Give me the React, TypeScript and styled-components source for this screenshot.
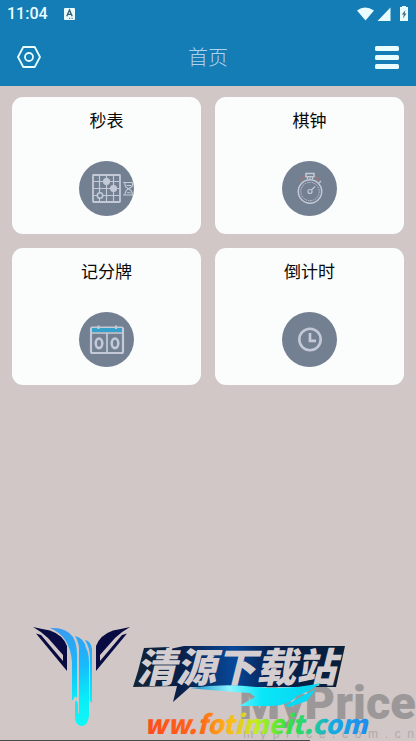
import React from 'react';
import styled, { createGlobalStyle } from 'styled-components';

const GlobalStyle = createGlobalStyle`
  *, *::before, *::after { box-sizing: border-box; }
  body {
    margin: 0;
    background: #d0c7c6;
    font-family: "Noto Sans CJK SC", "Noto Sans", sans-serif;
  }
`;

const Page = styled.div`
  position: relative;
  display: flex;
  flex-direction: column;
  min-height: 100vh;
  overflow: hidden;
  background: #d0c7c6;
`;

const Header = styled.header`
  background: #147db6;
  color: #e9fdff;
`;

const StatusBar = styled.div`
  display: flex;
  align-items: center;
  height: 28px;
  padding: 0 7px;
  font: 500 16px/28px Roboto, sans-serif;
`;

const StatusLeft = styled.div`
  display: flex;
  align-items: center;
  gap: 16px;
  flex: 1;
`;

const Toolbar = styled.div`
  display: grid;
  grid-template-columns: 1fr auto 1fr;
  align-items: center;
  height: 58px;
  padding: 0 16px;
`;

const IconButton = styled.button<{ $end?: boolean }>`
  display: flex;
  justify-self: ${(p) => (p.$end ? 'end' : 'start')};
  padding: 0;
  border: 0;
  background: none;
  color: inherit;
  cursor: pointer;
`;

const Title = styled.h1`
  margin: 0;
  color: #b0d2ed;
  font-size: 20px;
  font-weight: 300;
  line-height: 28px;
`;

const Cards = styled.main`
  display: grid;
  grid-template-columns: 1fr 1fr;
  gap: 14px;
  padding: 11px 12px;
`;

const Card = styled.button`
  display: flex;
  flex-direction: column;
  align-items: center;
  gap: 29px;
  padding: 11px 0 18px;
  border: 0;
  border-radius: 11px;
  background: #fbfcfc;
  color: #080808;
  font-family: inherit;
  font-size: 17px;
  line-height: 24px;
  cursor: pointer;
`;

const Disc = styled.span`
  display: flex;
  width: 55px;
  height: 55px;
  border-radius: 50%;
  background: #738092;
  overflow: hidden;
`;

const Watermark = styled.aside`
  position: absolute;
  right: 0;
  bottom: 0;
  width: 416px;
  height: 126px;
  pointer-events: none;
`;

const GearIcon = () => (
  <svg width="26" height="24" viewBox="0 0 26 24" fill="none" stroke="currentColor" strokeWidth="1.8">
    <path d="M7.3 2H18.7L24 12L18.7 22H7.3L2 12Z" strokeLinejoin="round" />
    <circle cx="13" cy="12" r="4" />
  </svg>
);

const MenuIcon = () => (
  <svg width="26" height="24" viewBox="0 0 26 24" fill="currentColor">
    <rect x="1" y="1" width="24" height="5" rx="1.6" />
    <rect x="1" y="10" width="24" height="5" rx="1.6" />
    <rect x="1" y="19" width="24" height="5" rx="1.6" />
  </svg>
);

const KeyboardBadge = () => (
  <svg width="11" height="12" viewBox="0 0 11 12">
    <rect width="11" height="12" rx="1" fill="#e9fdff" />
    <path d="M2.8 8.3L5.5 2L8.2 8.3M3.7 6.4H7.3" fill="none" stroke="#35617c" strokeWidth="1.4" />
    <path d="M5 10.3H6.2M7.5 10.3H8.7" stroke="#35617c" />
  </svg>
);

const StatusIcons = () => (
  <svg width="53" height="16" viewBox="0 0 53 16" fill="currentColor" aria-label="Wi-Fi, signal, battery">
    <path d="M1 4.4Q9 -1.6 18 4.4L9.5 14.5Z" />
    <path d="M34.5 1.5V15H21.5Z" />
    <path d="M46 1V0H50V1H52V15H44V1Z" />
    <path d="M49.5 4L45.8 8.6H47.8L47 12.5L50.5 7.6H48.6Z" fill="#426c83" />
  </svg>
);

const BoardIcon = () => (
  <svg width="55" height="55" viewBox="0 0 55 55" fill="none" stroke="#c3c9d6">
    <rect x="14" y="14" width="27" height="27" rx="0.5" strokeWidth="1.8" />
    <path d="M20.5 14V41M27.5 14V41M34.5 14V41M14 20.5H41M14 27.5H41M14 34.5H41" strokeWidth="1.2" />
    <circle cx="27.5" cy="20.5" r="3.2" fill="#c3c9d6" />
    <circle cx="34.5" cy="27.5" r="3.2" fill="#c3c9d6" />
    <circle cx="21" cy="34.5" r="2.7" fill="#738092" strokeWidth="1.6" />
    <path d="M44 21.5H55M44 34H55M46 21.5V24Q46 26 49.5 27.7Q46 29.5 46 34M53.5 21.5V24Q53.5 26 49.5 27.7Q53.5 29.5 53.5 34M47.5 24.5H52M48 31.8H51.5" strokeWidth="1.1" />
  </svg>
);

const StopwatchIcon = () => (
  <svg width="55" height="55" viewBox="0 0 55 55" fill="none" stroke="#c3c9d6">
    <path d="M18.5 20Q20 16.5 23 15.5M32 15.5Q36 17 37.5 20" stroke="#a9736f" strokeWidth="1.3" />
    <circle cx="28" cy="30.5" r="11.7" strokeWidth="1.5" />
    <circle cx="28" cy="30.5" r="9.2" strokeWidth="1" strokeDasharray="1.5 1" />
    <circle cx="28" cy="30.5" r="2" strokeWidth="1.2" />
    <path d="M29.5 29L33 25.5M28 18.5V16.5M25.5 18.5V16M30.5 18.5V16M37 22L39 20" strokeWidth="1.1" />
    <rect x="24" y="12.5" width="8" height="3.2" strokeWidth="1.5" />
  </svg>
);

const ScoreIcon = () => (
  <svg width="55" height="55" viewBox="0 0 55 55" fill="none" stroke="#c3c9d6">
    <rect x="12" y="15.5" width="32" height="25.5" rx="1.5" strokeWidth="2.2" />
    <path d="M12 21H44M28 21V41" strokeWidth="1.7" />
    <path d="M13 18H43" stroke="#34a1cb" strokeWidth="4" />
    <path d="M19.5 13.5V17M37 13.5V17" strokeWidth="2" />
    <ellipse cx="20" cy="31.3" rx="3.3" ry="4.8" strokeWidth="2.6" />
    <ellipse cx="36" cy="31.3" rx="3.3" ry="4.8" strokeWidth="2.6" />
  </svg>
);

const ClockIcon = () => (
  <svg width="55" height="55" viewBox="0 0 55 55" fill="none" stroke="#c3c9d6">
    <circle cx="28" cy="27.5" r="10.7" strokeWidth="2.6" />
    <path d="M28 21V28.8H34" strokeWidth="2.7" />
  </svg>
);

const Wing = () => (
  <path
    d="M33 12Q43 14 50 15.5Q63 20 67 31V56L36 18.5L41 20L63 46V40L48 23Q42 17 33 12Z"
    fill="#090b43"
  />
);

const SiteMark = () => (
  <svg width="416" height="126" viewBox="0 0 416 126">
    <defs>
      <linearGradient id="drip" gradientUnits="userSpaceOnUse" x1="60" y1="12" x2="75" y2="111">
        <stop offset="0" stopColor="#3b9af0" />
        <stop offset="0.4" stopColor="#18b9fb" />
        <stop offset="0.75" stopColor="#08eef8" />
        <stop offset="1" stopColor="#10f6f6" />
      </linearGradient>
      <linearGradient id="panel" gradientUnits="userSpaceOnUse" x1="134" y1="0" x2="343" y2="0">
        <stop offset="0" stopColor="#132433" />
        <stop offset="0.22" stopColor="#0a1f48" />
        <stop offset="0.48" stopColor="#07489a" />
        <stop offset="0.66" stopColor="#07204e" />
        <stop offset="1" stopColor="#08203a" />
      </linearGradient>
      <linearGradient id="swoosh" x1="0" y1="0" x2="1" y2="0">
        <stop offset="0" stopColor="#138ac4" />
        <stop offset="0.3" stopColor="#8cf4ff" />
        <stop offset="0.55" stopColor="#08e6f8" />
        <stop offset="1" stopColor="#08d2f0" />
      </linearGradient>
      <linearGradient id="rainbow" gradientUnits="userSpaceOnUse" x1="146" y1="0" x2="366" y2="0">
        <stop offset="0" stopColor="#ff4b1c" />
        <stop offset="0.25" stopColor="#ff6818" />
        <stop offset="0.37" stopColor="#ffb618" />
        <stop offset="0.5" stopColor="#c2ed22" />
        <stop offset="0.64" stopColor="#38e43c" />
        <stop offset="0.75" stopColor="#22d08c" />
        <stop offset="0.85" stopColor="#16a9e4" />
        <stop offset="1" stopColor="#218dee" />
      </linearGradient>
    </defs>

    <Wing />
    <g transform="matrix(-1 0 0 1 163 0)"><Wing /></g>
    <g fill="url(#drip)">
      <path d="M50 13Q66 12 73 22Q77 29 77 40V83L75 81L73 85H72V47Q70 21 50 13Z" />
      <path d="M75 21Q84 23 86 33Q89 38 89 48V101Q88 111 81 111Q75 110 75 102V87Q77 83 78 91V98Q79 101 79 96V39Q80 29 75 21Z" />
      <path d="M85 25Q91 26 92 34V88L90 86V43Q90 33 85 25Z" />
    </g>

    <g fill="#898788" opacity="0.72">
      <text x="416" y="104" textAnchor="end" fontFamily="Roboto, sans-serif" fontWeight="900" fontSize="47">MyPrice</text>
      <text x="414" y="123" textAnchor="end" fontFamily="Liberation Sans, sans-serif" fontSize="12" opacity="0.6">
        {'myprice.com.cn'.split('').join('\u00a0\u00a0')}
      </text>
    </g>

    <path d="M144 33L169 32L170 34L184 31H345L336 72H190L173 87L177 71L133 72L138 56Z" fill="url(#panel)" />
    <text x="136" y="67" fill="#d5ced0" fontFamily="Noto Sans CJK SC, sans-serif" fontWeight="900" fontStyle="italic" fontSize="40">清源下载站</text>
    <path d="M190 73Q225 68 256 72Q290 75 321 68Q309 77 297 81Q289 91 269 91H239L255 82L250 78Q217 76 190 73Z" fill="url(#swoosh)" />
    <path d="M285 91L300 82L316 74L307 86L289 92Z" fill="#08d9f4" />
    <text x="144" y="119" fill="url(#rainbow)" fontFamily="Noto Sans CJK SC, sans-serif" fontWeight="900" fontStyle="italic" fontSize="26">ww.fotimeit.com</text>
    <path d="M0 125.5H310" stroke="#49484a" />
  </svg>
);

const tools = [
  { name: '秒表', icon: <BoardIcon /> },
  { name: '棋钟', icon: <StopwatchIcon /> },
  { name: '记分牌', icon: <ScoreIcon /> },
  { name: '倒计时', icon: <ClockIcon /> },
];

export default function App() {
  return (
    <Page>
      <GlobalStyle />
      <Header>
        <StatusBar>
          <StatusLeft>
            <span>11:04</span>
            <KeyboardBadge />
          </StatusLeft>
          <StatusIcons />
        </StatusBar>
        <Toolbar>
          <IconButton aria-label="设置"><GearIcon /></IconButton>
          <Title>首页</Title>
          <IconButton $end aria-label="菜单"><MenuIcon /></IconButton>
        </Toolbar>
      </Header>
      <Cards>
        {tools.map((tool) => (
          <Card key={tool.name}>
            <span>{tool.name}</span>
            <Disc>{tool.icon}</Disc>
          </Card>
        ))}
      </Cards>
      <Watermark><SiteMark /></Watermark>
    </Page>
  );
}
